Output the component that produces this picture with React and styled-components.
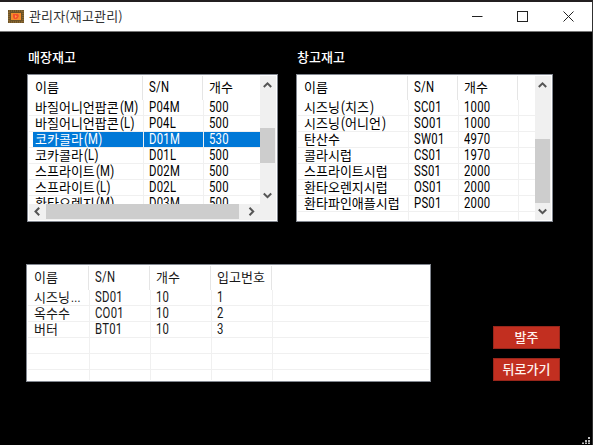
import React from "react";
import styled, { createGlobalStyle, css } from "styled-components";

const GlobalStyle = createGlobalStyle`
  * { box-sizing: border-box; }
  body { margin: 0; background: #000; overflow: hidden; }
  button { font: inherit; }
`;

const Window = styled.div`
  width: 593px;
  height: 445px;
  display: flex;
  flex-direction: column;
  background: #000;
  border-top: 2px solid #231f20;
  border-right: 1px solid #303030;
  font-family: "Noto Sans CJK KR", sans-serif;
  font-size: 13px;
  color: #000;
  overflow: hidden;
`;

const TitleBar = styled.header`
  height: 30px;
  flex: none;
  display: flex;
  align-items: center;
  padding-left: 8px;
  background: #fff;
  border-bottom: 1px solid #777;
`;

const AppIcon = styled.svg`
  width: 16px;
  height: 13px;
  margin-right: 5px;
`;

const Title = styled.h1`
  margin: -2px 0 0;
  flex: 1;
  font-size: 13px;
  font-weight: 400;
  line-height: 20px;
  letter-spacing: 0.15px;
  color: #333;
`;

const CaptionButton = styled.button`
  width: ${(p) => p.$w || 46}px;
  height: 28px;
  padding: 0 0 1px;
  border: 0;
  background: none;
  display: grid;
  place-items: center;
  svg { display: block; }
`;

const Body = styled.main`
  flex: 1;
  padding: 16px 0 0 27px;
  display: flex;
  flex-direction: column;
`;

const Stocks = styled.div`
  display: flex;
  gap: 18px;
  height: 174px;
`;

const Stock = styled.section`
  width: ${(p) => p.$width}px;
`;

const Label = styled.h2`
  margin: 0;
  height: 26px;
  padding-left: 1px;
  font-size: 13px;
  line-height: 17px;
  font-weight: 500;
  color: #fff;
`;

const ListFrame = styled.div`
  height: ${(p) => p.$height}px;
  width: ${(p) => p.$width}px;
  border: 1px solid #828790;
  padding: 1px;
  background: #fff;
  display: flex;
  flex-direction: column;
`;

const ListMain = styled.div`
  flex: 1;
  min-height: 0;
  display: flex;
`;

const ListContent = styled.div`
  flex: 1;
  min-width: 0;
  overflow: hidden;
  color: ${(p) => (p.$soft ? "#181818" : "#000")};
`;

const columns = css`
  display: grid;
  grid-template-columns: ${(p) => p.$columns};
`;

const HeaderRow = styled.div`
  ${columns}
  height: 24px;
`;

const HeaderCell = styled.div`
  padding-left: 6px;
  line-height: 22px;
  white-space: nowrap;
  border-right: 1px solid ${(p) => (p.$last ? "transparent" : "#e5e5e5")};
`;

const Row = styled.div`
  ${columns}
  height: 16px;
  padding-left: 1px;
  border-bottom: 1px solid #f0f0f0;
  ${(p) =>
    p.$selected &&
    css`
      color: #fff;
      background: linear-gradient(#0078d7, #0078d7) 4px 0 / 100% 100% no-repeat;
    `}
`;

const Cell = styled.div`
  padding-left: 5px;
  line-height: 14px;
  white-space: nowrap;
  border-right: 1px solid ${(p) => (p.$last ? "transparent" : "#f0f0f0")};
`;

const Hangul = styled.span`
  font-weight: 400;
`;

/* Latin letters and digits are set in a condensed half-width form. */
const Latin = styled.span`
  display: inline-block;
  font-family: Roboto, sans-serif;
  font-size: 14px;
  font-weight: 400;
  line-height: 14px;
  letter-spacing: 0.3px;
  transform: scaleX(0.81);
  transform-origin: left center;
  margin-left: ${(p) => (p.$joined ? 1 : 0)}px;
  margin-right: ${(p) => (p.$joined ? -1 : 0)}px;
`;

const VScroll = styled.div`
  width: 16px;
  display: flex;
  flex-direction: column;
  background: #f0f0f0;
`;

const HScroll = styled.div`
  height: 16px;
  flex: none;
  display: flex;
  align-items: stretch;
  background: #f0f0f0;
`;

const ArrowBox = styled.div`
  width: ${(p) => p.$w || 15}px;
  height: ${(p) => p.$h || 16}px;
  flex: none;
  display: grid;
  place-items: center;
  svg { display: block; }
`;

const VThumb = styled.div`
  width: 15px;
  height: ${(p) => p.$size}px;
  margin: ${(p) => p.$before}px 0 auto;
  background: #cdcdcd;
`;

const HThumb = styled.div`
  width: 193px;
  height: 15px;
  background: #cdcdcd;
`;

const Lower = styled.div`
  display: flex;
  align-items: flex-start;
  margin: 42px 0 0 -1px;
`;

const Actions = styled.div`
  display: flex;
  flex-direction: column;
  gap: 9px;
  margin: 62px 0 0 62px;
`;

const ActionButton = styled.button`
  width: 67px;
  height: 23px;
  padding: 0 0 2px;
  border: 1px solid #98261b;
  background: #c22f20;
  color: #fff2ee;
  font-size: 13px;
  line-height: 18px;
  font-weight: 500;
`;

const Grip = styled.svg`
  margin: auto 2px 1px auto;
  width: 8px;
  height: 7px;
`;

const arrowPaths = {
  up: "M0.8 6 L4.5 2.3 L8.2 6",
  down: "M0.8 2.5 L4.5 6.2 L8.2 2.5",
  left: "M6.2 0.8 L2.5 4.5 L6.2 8.2",
  right: "M2.5 0.8 L6.2 4.5 L2.5 8.2",
};

function Arrow({ dir }) {
  return (
    <svg width="9" height="9" viewBox="0 0 9 9">
      <path d={arrowPaths[dir]} fill="none" stroke="#555" strokeWidth="2" />
    </svg>
  );
}

function Text({ children }) {
  return children
    .split(/([가-힣]+)/)
    .filter(Boolean)
    .map((run, i) =>
      /[가-힣]/.test(run) ? (
        <Hangul key={i}>{run}</Hangul>
      ) : (
        <Latin key={i} $joined={i > 0}>{run}</Latin>
      )
    );
}

function ListView({ width, height, cols, head, rows, filler = 0, selected, vscroll, hscroll, soft }) {
  const blank = Array.from({ length: filler }, () => head.map(() => ""));
  return (
    <ListFrame $width={width} $height={height}>
      <ListMain>
        <ListContent $soft={soft}>
          <HeaderRow $columns={cols}>
            {head.map((h, i) => (
              <HeaderCell key={i} $last={i === head.length - 1}><Text>{h}</Text></HeaderCell>
            ))}
          </HeaderRow>
          {[...rows, ...blank].map((r, n) => (
            <Row key={n} $columns={cols} $selected={n === selected}>
              {head.map((_, i) => (
                <Cell key={i} $last={i === head.length - 1}><Text>{r[i] || ""}</Text></Cell>
              ))}
            </Row>
          ))}
        </ListContent>
        {vscroll && (
          <VScroll>
            <ArrowBox $h={18}><Arrow dir="up" /></ArrowBox>
            <VThumb $before={vscroll.before} $size={vscroll.size} />
            <ArrowBox $h={17}><Arrow dir="down" /></ArrowBox>
          </VScroll>
        )}
      </ListMain>
      {hscroll && (
        <HScroll>
          <ArrowBox $w={17} $h={15}><Arrow dir="left" /></ArrowBox>
          <HThumb />
          <ArrowBox $w={25} $h={15}><Arrow dir="right" /></ArrowBox>
        </HScroll>
      )}
    </ListFrame>
  );
}

const shopRows = [
  ["바질어니언팝콘(M)", "P04M", "500"],
  ["바질어니언팝콘(L)", "P04L", "500"],
  ["코카콜라(M)", "D01M", "530"],
  ["코카콜라(L)", "D01L", "500"],
  ["스프라이트(M)", "D02M", "500"],
  ["스프라이트(L)", "D02L", "500"],
  ["환타오렌지(M)", "D03M", "500"],
];

const storeRows = [
  ["시즈닝(치즈)", "SC01", "1000"],
  ["시즈닝(어니언)", "SO01", "1000"],
  ["탄산수", "SW01", "4970"],
  ["콜라시럽", "CS01", "1970"],
  ["스프라이트시럽", "SS01", "2000"],
  ["환타오렌지시럽", "OS01", "2000"],
  ["환타파인애플시럽", "PS01", "2000"],
];

const orderRows = [
  ["시즈닝...", "SD01", "10", "1"],
  ["옥수수", "CO01", "10", "2"],
  ["버터", "BT01", "10", "3"],
];

export default function App() {
  return (
    <Window>
      <GlobalStyle />
      <TitleBar>
        <AppIcon viewBox="0 0 16 13">
          <rect width="16" height="13" fill="#6b5228" />
          <rect x="1" y="1" width="14" height="11" fill="none" stroke="#a87c36" strokeDasharray="1 1" />
          <rect x="3" y="3" width="10" height="7" fill="#f28c2b" />
          <path d="M5 4h5l1 2-2 3H6L5 7z" fill="#f4502c" />
          <path d="M7 5l2 1.5L7 8z" fill="#ffa040" />
        </AppIcon>
        <Title>관리자(재고관리)</Title>
        <CaptionButton aria-label="minimize" $w={45}>
          <svg width="11" height="11"><path d="M0 5.5h10.5" stroke="#222" /></svg>
        </CaptionButton>
        <CaptionButton aria-label="maximize" $w={45}>
          <svg width="11" height="11"><rect x=".5" y=".5" width="10" height="10" fill="none" stroke="#222" /></svg>
        </CaptionButton>
        <CaptionButton aria-label="close" $w={47}>
          <svg width="11" height="11"><path d="M.5 .5l10 10M10.5 .5l-10 10" stroke="#222" /></svg>
        </CaptionButton>
      </TitleBar>
      <Body>
        <Stocks>
          <Stock $width={251}>
            <Label>매장재고</Label>
            <ListView
              width={251} height={148}
              cols="114px 60px 1fr"
              head={["이름", "S/N", "개수"]}
              rows={shopRows}
              selected={2}
              vscroll={{ before: 34, size: 35 }}
              hscroll
            />
          </Stock>
          <Stock $width={257}>
            <Label>창고재고</Label>
            <ListView
              width={257} height={148}
              cols="110px 50px 60px 1fr"
              head={["이름", "S/N", "개수", ""]}
              rows={storeRows}
              filler={1}
              vscroll={{ before: 45, size: 64 }}
            />
          </Stock>
        </Stocks>
        <Lower>
          <ListView
            width={405} height={118}
            cols="61px 61px 61px 61px 1fr"
            head={["이름", "S/N", "개수", "입고번호", ""]}
            rows={orderRows}
            filler={3}
            soft
          />
          <Actions>
            <ActionButton>발주</ActionButton>
            <ActionButton>뒤로가기</ActionButton>
          </Actions>
        </Lower>
        <Grip viewBox="0 0 8 7" fill="#bbb">
          <rect x="6" y="0" width="2" height="2" />
          <rect x="3" y="3" width="2" height="2" />
          <rect x="6" y="3" width="2" height="2" />
          <rect x="0" y="5.5" width="2" height="1.5" />
          <rect x="3" y="5.5" width="2" height="1.5" />
          <rect x="6" y="5.5" width="2" height="1.5" />
        </Grip>
      </Body>
    </Window>
  );
}
